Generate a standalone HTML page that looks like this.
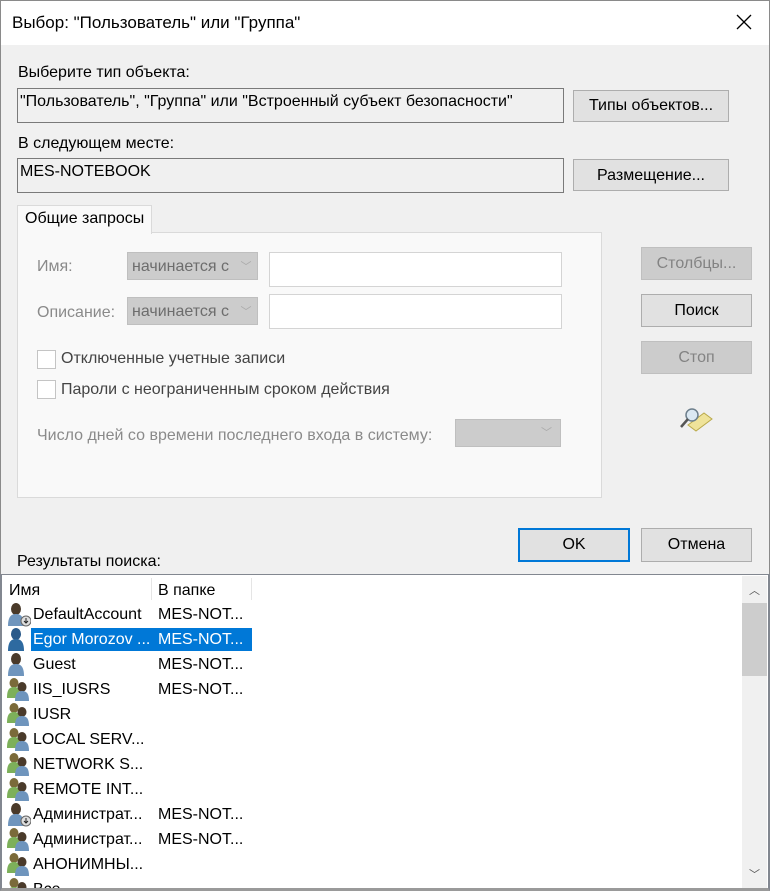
<!DOCTYPE html>
<html><head><meta charset="utf-8">
<style>
*{box-sizing:border-box;margin:0;padding:0}
body{width:770px;height:891px;overflow:hidden;background:#f0f0f0;font-family:"Liberation Sans",sans-serif;font-size:16px;color:#000;position:relative}
.a{position:absolute;white-space:nowrap}
.win{position:absolute;left:0;top:0;width:770px;height:891px;border:1px solid #8a8a8a}
.title{left:1px;top:1px;width:768px;height:44px;background:#fff}
.box{background:#f0f0f0;border:1px solid #7a7a7a;padding:4px 2px}
.btn{background:#e1e1e1;border:1px solid #adadad;text-align:center}
.dis{background:#cccccc;border:1px solid #bfbfbf;color:#838383;text-align:center}
.g{color:#8a8a8a}
.cb{width:19px;height:19px;border:1px solid #c4c4c4;background:#fff}
.row{position:absolute;left:5px;height:25px;width:250px}
.row span{position:absolute;top:4px}
</style></head><body>
<div class="win"></div>
<div class="a title"></div>
<div class="a" style="left:12px;top:13px;font-size:17px">Выбор: "Пользователь" или "Группа"</div>
<svg class="a" style="left:736px;top:14px" width="16" height="16"><path d="M1 1L15 15M15 1L1 15" stroke="#000" stroke-width="1.3"/></svg>

<div class="a" style="left:18px;top:64px">Выберите тип объекта:</div>
<div class="a box" style="left:17px;top:88px;width:547px;height:35px">"Пользователь", "Группа" или "Встроенный субъект безопасности"</div>
<div class="a btn" style="left:573px;top:90px;width:156px;height:32px;line-height:30px">Типы объектов...</div>
<div class="a" style="left:18px;top:135px">В следующем месте:</div>
<div class="a box" style="left:17px;top:158px;width:547px;height:35px">MES-NOTEBOOK</div>
<div class="a btn" style="left:573px;top:159px;width:156px;height:32px;line-height:31px">Размещение...</div>

<div class="a" style="left:17px;top:232px;width:585px;height:266px;background:#f9f9f9;border:1px solid #dadada"></div>
<div class="a" style="left:17px;top:205px;width:135px;height:29px;background:#f9f9f9;border:1px solid #dadada;border-bottom:none;padding:4px 7px">Общие запросы</div>

<div class="a g" style="left:37px;top:258px">Имя:</div>
<div class="a dis" style="left:127px;top:252px;width:131px;height:28px;line-height:28px;text-align:left;padding-left:4px;color:#6d6d6d;overflow:hidden">начинается с<span style="position:absolute;left:105px;top:0;width:26px;height:26px;background:#ccc;color:#aaa;font-size:11px;text-align:center">﹀</span></div>
<div class="a" style="left:269px;top:252px;width:293px;height:35px;border:1px solid #d4d4d4;background:#fff"></div>
<div class="a g" style="left:37px;top:304px">Описание:</div>
<div class="a dis" style="left:127px;top:297px;width:131px;height:28px;line-height:28px;text-align:left;padding-left:4px;color:#6d6d6d;overflow:hidden">начинается с<span style="position:absolute;left:105px;top:0;width:26px;height:26px;background:#ccc;color:#aaa;font-size:11px;text-align:center">﹀</span></div>
<div class="a" style="left:269px;top:294px;width:293px;height:35px;border:1px solid #d4d4d4;background:#fff"></div>
<div class="a cb" style="left:37px;top:350px"></div>
<div class="a" style="left:61px;top:350px;color:#444">Отключенные учетные записи</div>
<div class="a cb" style="left:37px;top:380px"></div>
<div class="a" style="left:61px;top:381px;color:#444">Пароли с неограниченным сроком действия</div>
<div class="a g" style="left:37px;top:427px">Число дней со времени последнего входа в систему:</div>
<div class="a dis" style="left:455px;top:419px;width:106px;height:28px;text-align:right;padding-right:8px;line-height:26px;color:#aaa;font-size:11px">﹀</div>

<div class="a dis" style="left:641px;top:247px;width:111px;height:33px;line-height:32px">Столбцы...</div>
<div class="a btn" style="left:641px;top:294px;width:111px;height:33px;line-height:32px">Поиск</div>
<div class="a dis" style="left:641px;top:341px;width:111px;height:33px;line-height:32px">Стоп</div>
<svg class="a" style="left:678px;top:405px" width="36" height="30">
<path d="M10 20L26 8L34 14L18 26Z" fill="#efe39a" stroke="#b9a94a"/>
<circle cx="14" cy="10" r="6" fill="#dbe8f2" stroke="#6d7f8c" stroke-width="1.5"/>
<path d="M10 14L3 22" stroke="#555" stroke-width="2.5"/>
</svg>

<div class="a" style="left:518px;top:528px;width:112px;height:34px;background:#e1e1e1;border:2px solid #0078d7;text-align:center;line-height:30px">OK</div>
<div class="a btn" style="left:641px;top:528px;width:111px;height:34px;line-height:32px">Отмена</div>
<div class="a" style="left:17px;top:553px">Результаты поиска:</div>

<div class="a" style="left:0;top:574px;width:770px;height:317px;background:#fff;border-top:1px solid #828790;border-right:2px solid #828790;border-bottom:3px solid #9a9a9a;border-left:2px solid #828790"></div>
<div class="a" style="left:742px;top:576px;width:25px;height:312px;background:#f0f0f0"></div>
<div class="a" style="left:742px;top:603px;width:25px;height:73px;background:#cdcdcd"></div>
<div class="a" style="left:749px;top:582px;font-size:11px;color:#555">︿</div>
<div class="a" style="left:749px;top:866px;font-size:11px;color:#555">﹀</div>
<div class="a" style="left:151px;top:578px;width:1px;height:22px;background:#e5e5e5"></div>
<div class="a" style="left:251px;top:578px;width:1px;height:22px;background:#e5e5e5"></div>
<div class="a" style="left:9px;top:582px">Имя</div>
<div class="a" style="left:158px;top:582px">В папке</div>

<svg width="0" height="0" style="position:absolute">
<defs>
<g id="u"><ellipse cx="10" cy="7" rx="5" ry="6" fill="#4a3a2a"/><path d="M2 24C2 15 5 12 10 12C15 12 18 15 18 24Z" fill="#6f95bd"/></g>
<g id="ud"><use href="#u"/><circle cx="20" cy="19" r="5" fill="#ddd" stroke="#666"/><path d="M20 16V21M18 19L20 21L22 19" stroke="#222" fill="none"/></g>
<g id="gr"><ellipse cx="8" cy="6" rx="4.5" ry="5" fill="#7a6a3a"/><path d="M1 21C1 13 3 10 8 10C13 10 14 13 14 21Z" fill="#7db05a"/><ellipse cx="16" cy="10" rx="4.5" ry="5" fill="#4a3a2a"/><path d="M9 24C9 17 11 14 16 14C21 14 23 17 23 24Z" fill="#6f95bd"/></g>
<g id="us"><ellipse cx="10" cy="7" rx="5" ry="6" fill="#2a5a8a"/><path d="M2 24C2 15 5 12 10 12C15 12 18 15 18 24Z" fill="#2e6aa0"/></g>
</defs></svg>

<div class="row" style="top:602px"><svg class="a" style="left:1px;top:0" width="25" height="25"><use href="#ud"/></svg><span style="left:28px">DefaultAccount</span><span style="left:153px">MES-NOT...</span></div>
<div class="row" style="top:627px"><div class="a" style="left:26px;top:1px;width:221px;height:23px;background:#0078d7"></div><svg class="a" style="left:1px;top:0" width="25" height="25"><use href="#us"/></svg><span style="left:28px;color:#fff">Egor Morozov ...</span><span style="left:153px;color:#fff">MES-NOT...</span></div>
<div class="row" style="top:652px"><svg class="a" style="left:1px;top:0" width="25" height="25"><use href="#u"/></svg><span style="left:28px">Guest</span><span style="left:153px">MES-NOT...</span></div>
<div class="row" style="top:677px"><svg class="a" style="left:1px;top:0" width="25" height="25"><use href="#gr"/></svg><span style="left:28px">IIS_IUSRS</span><span style="left:153px">MES-NOT...</span></div>
<div class="row" style="top:702px"><svg class="a" style="left:1px;top:0" width="25" height="25"><use href="#gr"/></svg><span style="left:28px">IUSR</span></div>
<div class="row" style="top:727px"><svg class="a" style="left:1px;top:0" width="25" height="25"><use href="#gr"/></svg><span style="left:28px">LOCAL SERV...</span></div>
<div class="row" style="top:752px"><svg class="a" style="left:1px;top:0" width="25" height="25"><use href="#gr"/></svg><span style="left:28px">NETWORK S...</span></div>
<div class="row" style="top:777px"><svg class="a" style="left:1px;top:0" width="25" height="25"><use href="#gr"/></svg><span style="left:28px">REMOTE INT...</span></div>
<div class="row" style="top:802px"><svg class="a" style="left:1px;top:0" width="25" height="25"><use href="#ud"/></svg><span style="left:28px">Администрат...</span><span style="left:153px">MES-NOT...</span></div>
<div class="row" style="top:827px"><svg class="a" style="left:1px;top:0" width="25" height="25"><use href="#gr"/></svg><span style="left:28px">Администрат...</span><span style="left:153px">MES-NOT...</span></div>
<div class="row" style="top:852px"><svg class="a" style="left:1px;top:0" width="25" height="25"><use href="#gr"/></svg><span style="left:28px">АНОНИМНЫ...</span></div>
<div class="row" style="top:877px;height:11px;overflow:hidden"><svg class="a" style="left:1px;top:0" width="25" height="25"><use href="#gr"/></svg><span style="left:28px">Все</span></div>
</body></html>
